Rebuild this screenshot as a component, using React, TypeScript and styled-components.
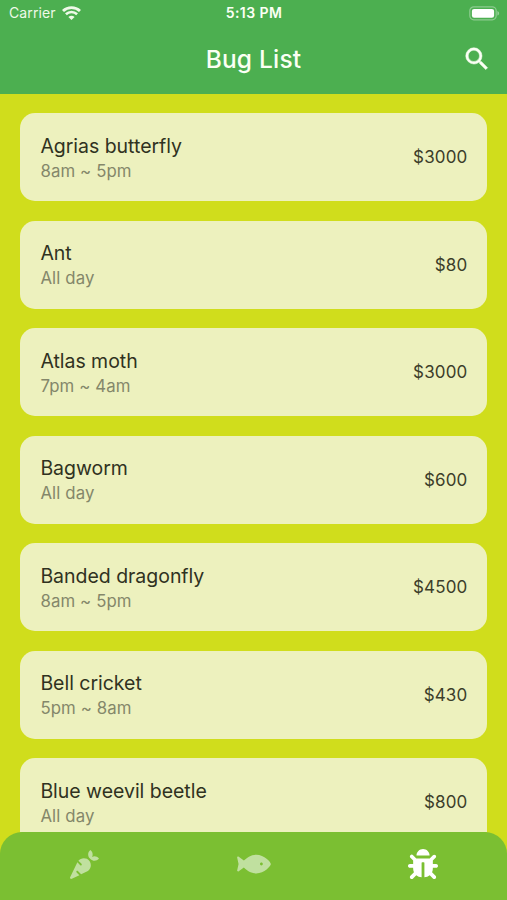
import React from "react";
import styled, { createGlobalStyle } from "styled-components";
import { FaBug, FaCarrot, FaFish } from "react-icons/fa";
import { MdSearch } from "react-icons/md";

const GlobalStyle = createGlobalStyle`
  *, *::before, *::after { box-sizing: border-box; }
  body { margin: 0; font-family: Inter, Roboto, sans-serif; }
`;

const Screen = styled.div`
  display: flex;
  flex-direction: column;
  width: 100%;
  height: 900px;
  overflow: hidden;
  background: #d0dd1c;
`;

const Header = styled.header`
  flex: none;
  height: 93.5px;
  background: #4caf50;
  color: #fbfff4;
`;

const StatusBar = styled.div`
  display: grid;
  grid-template-columns: 1fr auto 1fr;
  align-items: center;
  height: 26px;
  padding: 0 7px 0 9px;
  font-size: 14px;
  line-height: 26px;
`;

const Carrier = styled.span`
  display: flex;
  align-items: center;
  gap: 6px;
  letter-spacing: 0.12px;
  opacity: 0.93;
`;

const Clock = styled.span`
  padding-right: 1px;
  font-weight: 600;
  font-size: 14px;
  letter-spacing: 0.45px;
`;

const Battery = styled.svg`
  justify-self: end;
`;

const AppBar = styled.div`
  display: grid;
  grid-template-columns: 1fr auto 1fr;
  align-items: center;
  height: 66px;
  padding: 0 15px;
`;

const Title = styled.h1`
  grid-column: 2;
  margin: 0;
  font-size: 24.5px;
  font-weight: 500;
  line-height: 30px;
  letter-spacing: 0.2px;
`;

const SearchButton = styled.button`
  justify-self: end;
  display: flex;
  padding: 0;
  border: 0;
  background: none;
  color: inherit;

  path:last-child {
    stroke: currentColor;
    stroke-width: 0.4px;
  }
`;

const List = styled.ul`
  flex: 1;
  min-height: 0;
  display: flex;
  flex-direction: column;
  gap: 19.5px;
  margin: 0;
  padding: 19.6px 19.6px 0 20.4px;
  overflow: hidden;
  list-style: none;
`;

const Card = styled.li`
  flex: none;
  display: flex;
  align-items: center;
  justify-content: space-between;
  height: 88px;
  padding: 0 20px;
  border-radius: 15px;
  background: #edf1be;
`;

const Details = styled.div`
  padding-top: 3px;
`;

const Name = styled.div`
  font-size: 19.5px;
  line-height: 25px;
  letter-spacing: -0.03px;
  color: #30321f;
`;

const Hours = styled.div`
  font-size: 16.8px;
  line-height: 25px;
  letter-spacing: 0.12px;
  color: #84876a;
`;

const Price = styled.span`
  font-size: 17px;
  letter-spacing: 0.15px;
  color: #3c3e2a;
`;

const TabBar = styled.nav`
  flex: none;
  display: grid;
  grid-template-columns: repeat(3, 1fr);
  height: 68.5px;
  border-radius: 22px 22px 0 0;
  background: #7bbf32;
`;

const Tab = styled.button<{ $active?: boolean }>`
  display: flex;
  align-items: center;
  justify-content: center;
  padding: 0 0 3px;
  border: 0;
  background: none;
  color: ${({ $active }) => ($active ? "#ffffff" : "#c0e09f")};
`;

const FishIcon = styled(FaFish)`
  width: 34px;
  height: 30px;
`;

const bugs = [
  { name: "Agrias butterfly", hours: "8am ~ 5pm", price: 3000 },
  { name: "Ant", hours: "All day", price: 80 },
  { name: "Atlas moth", hours: "7pm ~ 4am", price: 3000 },
  { name: "Bagworm", hours: "All day", price: 600 },
  { name: "Banded dragonfly", hours: "8am ~ 5pm", price: 4500 },
  { name: "Bell cricket", hours: "5pm ~ 8am", price: 430 },
  { name: "Blue weevil beetle", hours: "All day", price: 800 },
];

const WifiIcon = () => (
  <svg width="19" height="15" viewBox="0 0 19 15" fill="none" stroke="currentColor">
    <path d="M1 5C5.8.5 13.2.5 18 5" strokeWidth="2.9" />
    <path d="M3.9 8.3c3.2-3 8-3 11.2 0" strokeWidth="2.6" />
    <path d="M6.4 10.9c1.7-1.7 4.5-1.7 6.2 0L9.5 14Z" fill="currentColor" stroke="none" />
  </svg>
);

const BatteryIcon = () => (
  <Battery width="31" height="15" viewBox="0 0 31 15" fill="none">
    <rect x="0.8" y="0.8" width="26.4" height="13" rx="4" stroke="#fff" strokeOpacity="0.36" strokeWidth="1.2" />
    <rect x="2.9" y="2.9" width="22.2" height="8.8" rx="2.2" fill="#fff" />
    <path d="M28.4 5c2.3.9 2.3 3.7 0 4.6Z" fill="#fff" fillOpacity="0.4" />
  </Battery>
);

export default function App() {
  return (
    <>
      <GlobalStyle />
      <Screen>
        <Header>
          <StatusBar>
            <Carrier>
              Carrier
              <WifiIcon />
            </Carrier>
            <Clock>5:13 PM</Clock>
            <BatteryIcon />
          </StatusBar>
          <AppBar>
            <Title>Bug List</Title>
            <SearchButton aria-label="Search">
              <MdSearch size={30} />
            </SearchButton>
          </AppBar>
        </Header>
        <List>
          {bugs.map((bug) => (
            <Card key={bug.name}>
              <Details>
                <Name>{bug.name}</Name>
                <Hours>{bug.hours}</Hours>
              </Details>
              <Price>${bug.price}</Price>
            </Card>
          ))}
        </List>
        <TabBar>
          <Tab aria-label="Vegetables">
            <FaCarrot size={29} />
          </Tab>
          <Tab aria-label="Fish">
            <FishIcon />
          </Tab>
          <Tab aria-label="Bugs" $active>
            <FaBug size={30} />
          </Tab>
        </TabBar>
      </Screen>
    </>
  );
}
